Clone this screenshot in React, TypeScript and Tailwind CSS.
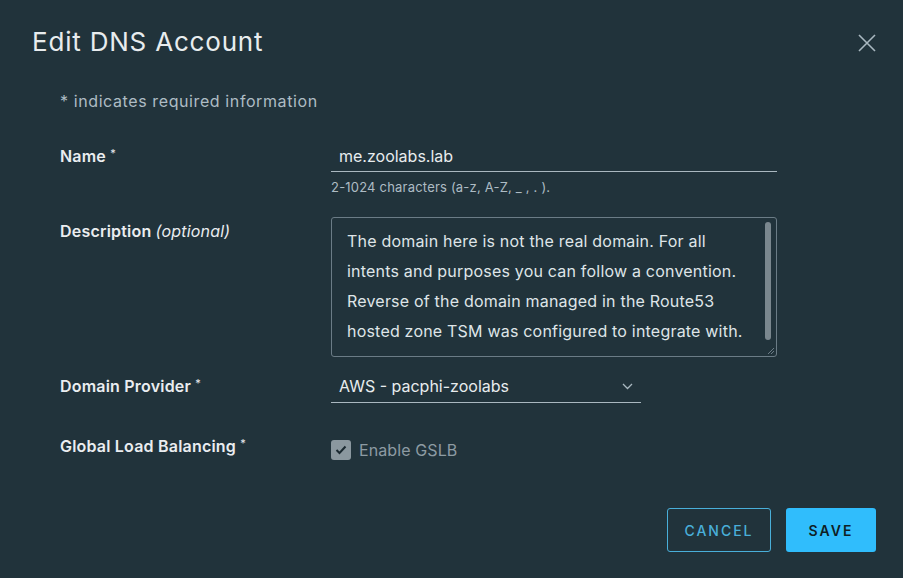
import React from "react";

export default function App() {
  const font = { fontFamily: "Inter, 'Noto Sans', sans-serif" };
  return (
    <div className="w-[903px] h-[578px] bg-[#21333b] relative overflow-hidden" style={font}>
      <div className="flex items-start justify-between pl-[32px] pr-[26px] pt-[24px]">
        <h1 className="text-[26px] leading-[36px] text-[#e8ecee] font-normal tracking-[0.8px]">Edit DNS Account</h1>
        <button className="mt-[9px] w-[20px] h-[20px] flex items-center justify-center">
          <svg width="18" height="18" viewBox="0 0 18 18" stroke="#a9b8c0" strokeWidth="1.6" fill="none">
            <path d="M1 1 L17 17 M17 1 L1 17" />
          </svg>
        </button>
      </div>
      <div className="pl-[60px] pt-[30px] text-[16px] leading-[22px] tracking-[0.6px] text-[#aebcc4]">* indicates required information</div>

      <div className="pl-[60px] mt-[33px] flex flex-col">
        {/* Name */}
        <div className="flex">
          <div className="w-[271px] text-[16px] leading-[22px] font-semibold text-[#eaedf0] tracking-[0.2px]">
            Name <sup className="font-normal text-[11px]">*</sup>
          </div>
          <div className="flex flex-col">
            <div className="w-[446px] border-b border-[#aab8c0] pl-[8px] pb-[4px] text-[16px] leading-[22px] text-[#e8ecee]">me.zoolabs.lab</div>
            <div className="text-[13px] leading-[16px] mt-[7px] tracking-[0.2px] text-[#aebcc4]">2-1024 characters (a-z, A-Z, _ , . ).</div>
          </div>
        </div>

        {/* Description */}
        <div className="flex mt-[22px]">
          <div className="w-[271px] pt-[3px] text-[16px] leading-[22px] font-semibold text-[#eaedf0] tracking-[0.2px]">
            Description <span className="font-normal italic">(optional)</span>
          </div>
          <div className="relative w-[446px] h-[140px] border border-[#6b7c86] rounded-[3px] pl-[15px] pr-[20px] pt-[8px] text-[16px] leading-[30px] tracking-[0.2px] text-[#dfe5e8] whitespace-nowrap">
            The domain here is not the real domain. For all
            <br />
            intents and purposes you can follow a convention.
            <br />
            Reverse of the domain managed in the Route53
            <br />
            hosted zone TSM was configured to integrate with.
            <div className="absolute right-[5px] top-[4px] w-[6px] h-[118px] rounded-[3px] bg-[#7a878e]" />
            <svg className="absolute right-[1px] bottom-[1px]" width="8" height="8" viewBox="0 0 8 8" stroke="#6b7c86" strokeWidth="1">
              <path d="M7 1 L1 7 M7 4 L4 7" />
            </svg>
          </div>
        </div>

        {/* Domain Provider */}
        <div className="flex mt-[18px]">
          <div className="w-[271px] text-[16px] leading-[22px] font-semibold text-[#eaedf0] tracking-[0.2px]">
            Domain Provider <sup className="font-normal text-[11px]">*</sup>
          </div>
          <div className="w-[310px] border-b border-[#aab8c0] pl-[8px] pr-[8px] pb-[5px] flex items-center justify-between text-[16px] leading-[22px] text-[#e8ecee]">
            <span>AWS - pacphi-zoolabs</span>
            <svg width="11" height="7" viewBox="0 0 11 7" fill="none" stroke="#a9b8c0" strokeWidth="1.3">
              <path d="M1 1 L5.5 5.5 L10 1" />
            </svg>
          </div>
        </div>

        {/* GSLB */}
        <div className="flex mt-[32px]">
          <div className="w-[271px] text-[16px] leading-[22px] font-semibold text-[#eaedf0] tracking-[0.2px]">
            Global Load Balancing <sup className="font-normal text-[11px]">*</sup>
          </div>
          <div className="flex items-center gap-[8px] mt-[4px]">
            <div className="w-[20px] h-[20px] rounded-[3px] bg-[#8b989f] flex items-center justify-center">
              <svg width="12" height="10" viewBox="0 0 12 10" fill="none" stroke="#1b2a31" strokeWidth="2">
                <path d="M1.5 5 L4.5 8 L10.5 1.5" />
              </svg>
            </div>
            <span className="text-[16px] leading-[22px] tracking-[0.1px] text-[#8d9ba3]">Enable GSLB</span>
          </div>
        </div>
      </div>

      <div className="absolute right-[27px] bottom-[26px] flex gap-[15px]">
        <button className="w-[104px] h-[44px] border border-[#49afd9] rounded-[3px] text-[#49afd9] text-[14px] font-medium tracking-[2px]">CANCEL</button>
        <button className="w-[90px] h-[44px] bg-[#30bdfc] rounded-[3px] text-[#0f1f26] text-[14px] font-semibold tracking-[2px]">SAVE</button>
      </div>
    </div>
  );
}
